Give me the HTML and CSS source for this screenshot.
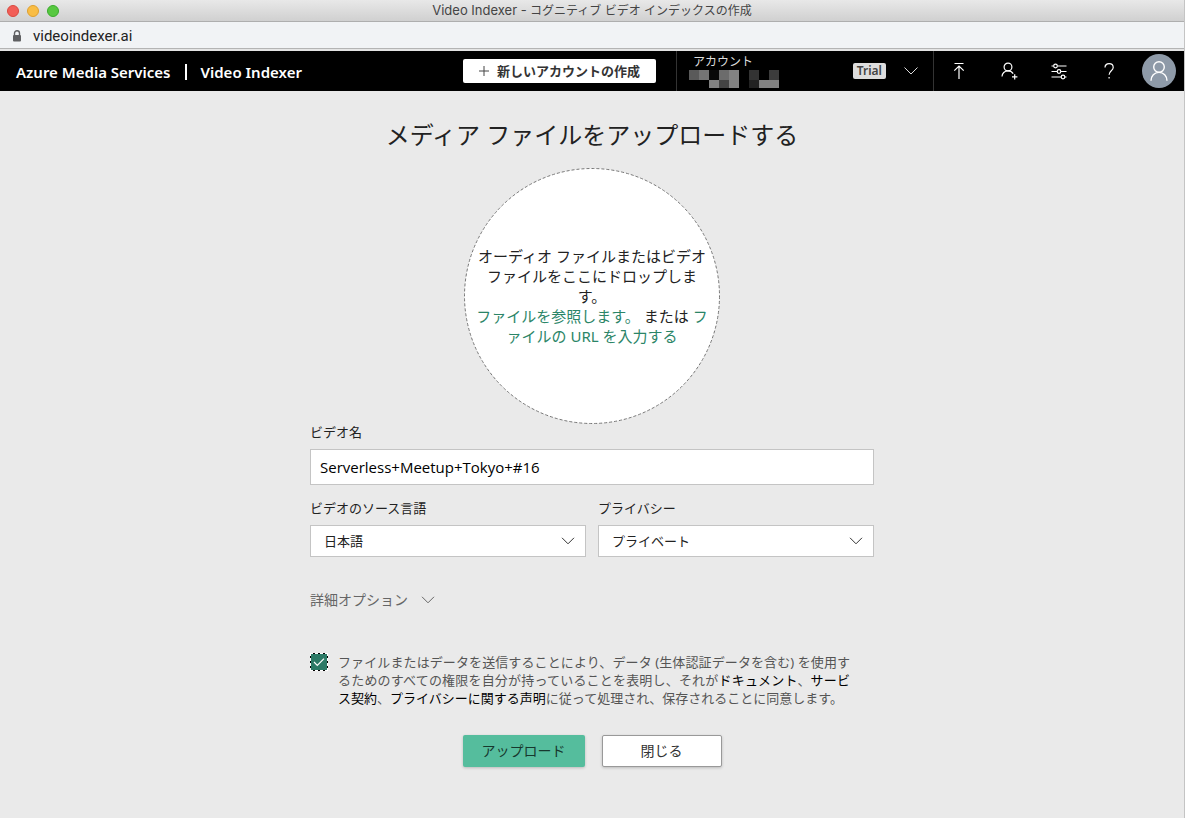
FILE: index.html
```html
<!DOCTYPE html>
<html lang="ja">
<head>
    <meta charset="UTF-8">
    <meta name="viewport" content="width=device-width, initial-scale=1.0">
    <title>Video Indexer - コグニティブ ビデオ インデックスの作成</title>
    <link rel="stylesheet" href="styles.css">
</head>
<body>
    <div class="window">
        <div class="titlebar">
            <div class="titlebar__lights">
                <span class="light light--close"></span>
                <span class="light light--min"></span>
                <span class="light light--max"></span>
            </div>
            <div class="titlebar__title"><span class="titlebar__app">Video Indexer -</span> コグニティブ ビデオ インデックスの作成</div>
        </div>
        <div class="urlbar">
            <svg class="urlbar__lock" width="10" height="12" viewBox="0 0 10 12">
                <path d="M2.5 5.5V3.3a2.5 2.5 0 0 1 5 0v2.2" fill="none" stroke="#5f6062" stroke-width="1.4"/>
                <rect x="1" y="5" width="8" height="6.4" rx="1" fill="#5f6062"/>
            </svg>
            <span>videoindexer.ai</span>
        </div>

        <header class="header">
            <div class="header__brand">
                <span>Azure Media Services</span>
                <span class="header__bar"></span>
                <span>Video Indexer</span>
            </div>
            <button class="new-account" type="button">
                <svg width="10" height="10" viewBox="0 0 10 10"><path d="M5 0v10M0 5h10" stroke="#444" fill="none"/></svg>
                新しいアカウントの作成
            </button>
            <button class="account" type="button">
                <span class="account__info">
                    <span class="account__label">アカウント</span>
                    <svg class="account__name" width="90" height="18" viewBox="0 0 90 18" shape-rendering="crispEdges">
                        <path d="M0 0h10v10H0z" fill="#5a5a5a"/>
                        <path d="M10 0h10v10H10z" fill="#747474"/>
                        <path d="M20 0h10v10H20z" fill="#080808"/>
                        <path d="M30 0h10v10H30z" fill="#6c6c6c"/>
                        <path d="M40 0h10v18H40zM20 10h10v8H20z" fill="#828282"/>
                        <path d="M30 10h10v8H30z" fill="#444"/>
                        <path d="M60 0h10v10H60z" fill="#333"/>
                        <path d="M80 0h10v10H80z" fill="#3c3c3c"/>
                        <path d="M60 10h10v8H60z" fill="#222"/>
                        <path d="M70 10h20v8H70z" fill="#828282"/>
                    </svg>
                </span>
                <span class="account__plan">Trial</span>
                <svg width="14" height="8" viewBox="0 0 14 8"><path d="M.5.5 7 7 13.5.5" fill="none" stroke="#ddd"/></svg>
            </button>
            <nav class="tools">
                <button class="tools__item" type="button" aria-label="アップロード">
                    <svg width="20" height="20" viewBox="0 0 20 20" fill="none" stroke="#fff" stroke-width="1.2">
                        <path d="M5.5 2.5h9M10 5v13M5.3 9.7 10 5l4.7 4.7"/>
                    </svg>
                </button>
                <button class="tools__item" type="button" aria-label="ユーザーの招待">
                    <svg width="20" height="20" viewBox="0 0 20 20" fill="none" stroke="#fff" stroke-width="1.2">
                        <circle cx="9" cy="6" r="3.9"/>
                        <path d="M3 15.6c0-3.3 2.6-5.7 6-5.7 2.6 0 4.2 1.2 5.2 2.7M15.7 13.3v5.2M13 15.9h5.4"/>
                    </svg>
                </button>
                <button class="tools__item" type="button" aria-label="設定">
                    <svg width="20" height="20" viewBox="0 0 20 20" fill="none" stroke="#fff" stroke-width="1.2">
                        <path d="M2.5 5h2.2M8.3 5h9.2M2.5 10.5h5.7M11.8 10.5h5.7M2.5 16h9.7M15.8 16h1.7"/>
                        <circle cx="6.5" cy="5" r="1.8"/>
                        <circle cx="10" cy="10.5" r="1.8"/>
                        <circle cx="14" cy="16" r="1.8"/>
                    </svg>
                </button>
                <button class="tools__item" type="button" aria-label="ヘルプ">
                    <svg width="20" height="20" viewBox="0 0 20 20" fill="none" stroke="#fff" stroke-width="1.2">
                        <path d="M6 6.6c0-2.4 1.7-4 4.1-4s4.1 1.5 4.1 3.8c0 3.2-4.1 3.7-4.1 7.4M10.1 16v1.6"/>
                    </svg>
                </button>
                <button class="tools__item" type="button" aria-label="プロフィール">
                    <svg width="34" height="34" viewBox="0 0 34 34" fill="none" stroke="#fff" stroke-width="1.4">
                        <circle cx="17" cy="17" r="17" fill="#8e9aa8" stroke="none"/>
                        <circle cx="17" cy="13" r="5.3"/>
                        <path d="M9 26.8c0-4.8 3.4-8.4 8-8.4s8 3.6 8 8.4"/>
                    </svg>
                </button>
            </nav>
        </header>

        <main class="upload">
            <h1 class="upload__title">メディア ファイルをアップロードする</h1>
            <div class="dropzone">
                <svg class="dropzone__ring" viewBox="0 0 256 256">
                    <circle cx="128" cy="128" r="127.5" fill="#fff" stroke="#777" stroke-dasharray="3 2"/>
                </svg>
                <p class="dropzone__text">
                    オーディオ ファイルまたはビデオ ファイルをここにドロップします。<br>
                    <a href="#">ファイルを参照します。</a> または <a href="#">ファイルの URL を入力する</a>
                </p>
            </div>

            <form class="form">
                <div class="field">
                    <label for="name">ビデオ名</label>
                    <input class="field__input" id="name" type="text" value="Serverless+Meetup+Tokyo+#16">
                </div>
                <div class="form__row">
                    <div class="field">
                        <label for="lang">ビデオのソース言語</label>
                        <div class="select">
                            <select id="lang"><option>日本語</option></select>
                            <svg width="14" height="8" viewBox="0 0 14 8"><path d="M1 .8 7 6.8 13 .8" fill="none" stroke="#333"/></svg>
                        </div>
                    </div>
                    <div class="field">
                        <label for="privacy">プライバシー</label>
                        <div class="select">
                            <select id="privacy"><option>プライベート</option></select>
                            <svg width="14" height="8" viewBox="0 0 14 8"><path d="M1 .8 7 6.8 13 .8" fill="none" stroke="#333"/></svg>
                        </div>
                    </div>
                </div>
                <button class="advanced" type="button">
                    詳細オプション
                    <svg width="14" height="8" viewBox="0 0 14 8"><path d="M1 .8 7 6.8 13 .8" fill="none" stroke="#666"/></svg>
                </button>
                <div class="consent">
                    <div class="check">
                        <input id="consent" type="checkbox" checked>
                        <svg width="12" height="10" viewBox="0 0 12 10"><path d="M1 5 4.3 8.3 11 1.6" fill="none" stroke="#fff" stroke-width="1.2"/></svg>
                    </div>
                    <label for="consent">ファイルまたはデータを送信することにより、データ (生体認証データを含む) を使用するためのすべての権限を自分が持っていることを表明し、それが<a href="#">ドキュメント</a>、<a href="#">サービス契約</a>、<a href="#">プライバシーに関する声明</a>に従って処理され、保存されることに同意します。</label>
                </div>
                <div class="actions">
                    <button class="btn btn--primary" type="submit">アップロード</button>
                    <button class="btn" type="button">閉じる</button>
                </div>
            </form>
        </main>
    </div>
</body>
</html>
```
FILE: styles.css
```css
* {
    box-sizing: border-box;
}
body {
    margin: 0;
    font-family: "Noto Sans", "Noto Sans CJK JP", sans-serif;
    color: #222;
    background-color: #eaeaea;
}
button,
input,
select {
    font-family: inherit;
    color: inherit;
}
button {
    padding: 0;
    border: none;
    background: none;
    cursor: pointer;
}
a {
    text-decoration: none;
}
svg {
    display: block;
    flex: none;
}
.window {
    min-height: 100vh;
    border-right: 1px solid #c4c4c4;
}

/* browser window */
.titlebar {
    display: grid;
    grid-template-columns: 1fr auto 1fr;
    align-items: center;
    height: 22px;
    padding: 0 7px;
    border-bottom: 1px solid #aeaeae;
    background: linear-gradient(#e8e8e8, #d0d0d0);
}
.titlebar__lights {
    display: flex;
    gap: 8px;
}
.light {
    width: 12px;
    height: 12px;
    border: 1px solid;
    border-radius: 50%;
}
.light--close {
    border-color: #d9493f;
    background-color: #f25e57;
}
.light--min {
    border-color: #dfa02f;
    background-color: #f9bd44;
}
.light--max {
    border-color: #3aab2c;
    background-color: #57c840;
}
.titlebar__title {
    font-family: Inter, "Noto Sans CJK JP", sans-serif;
    font-size: 12px;
    line-height: 20px;
    color: #444;
}
.titlebar__app {
    font-size: 13px;
}
.urlbar {
    display: flex;
    align-items: center;
    gap: 11px;
    height: 29px;
    padding: 0 12px;
    border-bottom: 2px solid #e4e4e4;
    box-shadow: inset 0 -1px #b4b4b4;
    background-color: #f1f3f5;
    font-family: Roboto, sans-serif;
    font-size: 15px;
    line-height: 20px;
}

/* header */
.header {
    display: flex;
    align-items: center;
    height: 40px;
    color: #fff;
    background-color: #000;
}
.header__brand {
    display: flex;
    align-items: center;
    gap: 14px;
    margin-right: auto;
    padding: 2px 0 0 16px;
    font-size: 15px;
    font-weight: 600;
    line-height: 20px;
    white-space: nowrap;
}
.header__bar {
    width: 2px;
    height: 16px;
    background-color: #fff;
}
.new-account {
    display: flex;
    align-items: center;
    justify-content: center;
    gap: 8px;
    width: 193px;
    height: 24px;
    margin-right: 20px;
    border-radius: 2px;
    background-color: #fff;
    font-size: 13px;
    font-weight: 600;
    line-height: 20px;
    color: #333;
}
.account {
    display: flex;
    align-items: center;
    width: 258px;
    height: 40px;
    padding: 0 15px 0 12px;
    border: 1px solid #333;
    border-width: 0 1px;
}
.account__info {
    display: flex;
    flex-direction: column;
    align-items: flex-start;
    margin-right: auto;
}
.account__label {
    padding-left: 4px;
    font-size: 12px;
    line-height: 16px;
    color: #ddd;
}
.account__plan {
    margin-right: 18px;
    padding: 0 4px;
    border-radius: 2px;
    background-color: #ddd;
    font-size: 12px;
    font-weight: 600;
    line-height: 16px;
    color: #444;
}
.tools {
    display: flex;
}
.tools__item {
    display: flex;
    align-items: center;
    justify-content: center;
    width: 50px;
    height: 40px;
}

/* upload page */
.upload {
    display: flex;
    flex-direction: column;
    align-items: center;
    padding: 28px 16px;
}
.upload__title {
    margin: 0 0 17px;
    font-size: 24px;
    font-weight: 400;
    line-height: 32px;
}
.dropzone {
    display: grid;
    place-items: center;
    width: 256px;
    height: 256px;
}
.dropzone__ring,
.dropzone__text {
    grid-area: 1 / 1;
}
.dropzone__ring {
    width: 100%;
    height: 100%;
}
.dropzone__text {
    margin: 0;
    padding: 0 10px;
    font-size: 15px;
    line-height: 20px;
    line-break: loose;
    text-align: center;
}
.dropzone__text a {
    color: #2b8567;
}
.form {
    width: 100%;
    max-width: 564px;
}
.form__row {
    display: grid;
    grid-template-columns: 1fr 1fr;
    gap: 12px;
    margin-top: 15px;
}
.field {
    display: flex;
    flex-direction: column;
    gap: 9px;
    font-size: 13px;
    line-height: 16px;
}
.field__input {
    height: 36px;
    padding: 0 9px;
    border: 1px solid #c4c4c4;
    background-color: #fff;
    font-family: "Open Sans", "Noto Sans CJK JP", sans-serif;
    font-size: 15px;
    color: #000;
}
.select {
    display: grid;
    align-items: center;
}
.select select,
.select svg {
    grid-area: 1 / 1;
}
.select select {
    height: 32px;
    padding: 0 13px;
    border: 1px solid #c4c4c4;
    border-radius: 0;
    appearance: none;
    background-color: #fff;
    font-size: 13px;
}
.select svg {
    justify-self: end;
    margin-right: 11px;
    pointer-events: none;
}
.advanced {
    display: flex;
    align-items: center;
    gap: 13px;
    margin-top: 33px;
    font-size: 14px;
    line-height: 20px;
    color: #666;
}
.consent {
    display: flex;
    gap: 10px;
    margin-top: 43px;
    padding-right: 24px;
    font-size: 13px;
    line-height: 18px;
    text-align: justify;
    color: #555;
}
.consent a {
    color: #000;
}
.check {
    display: grid;
    flex: none;
    place-items: center;
    align-self: flex-start;
}
.check input,
.check svg {
    grid-area: 1 / 1;
}
.check input {
    width: 18px;
    height: 18px;
    margin: 0;
    border: 1px dashed #fff;
    border-radius: 0;
    appearance: none;
    background: linear-gradient(#2c7a66, #2c7a66) padding-box, #000;
}
.check svg {
    pointer-events: none;
}
.actions {
    display: flex;
    justify-content: center;
    gap: 17px;
    margin-top: 28px;
}
.btn {
    width: 120px;
    height: 32px;
    border: 1px solid #999;
    border-radius: 2px;
    background-color: #fff;
    box-shadow: 0 1px 3px rgba(0,0,0,.2);
    font-size: 14px;
    line-height: 20px;
    color: #333;
}
.btn--primary {
    width: 122px;
    border: none;
    background-color: #55bd9d;
    color: #17382e;
}
```
